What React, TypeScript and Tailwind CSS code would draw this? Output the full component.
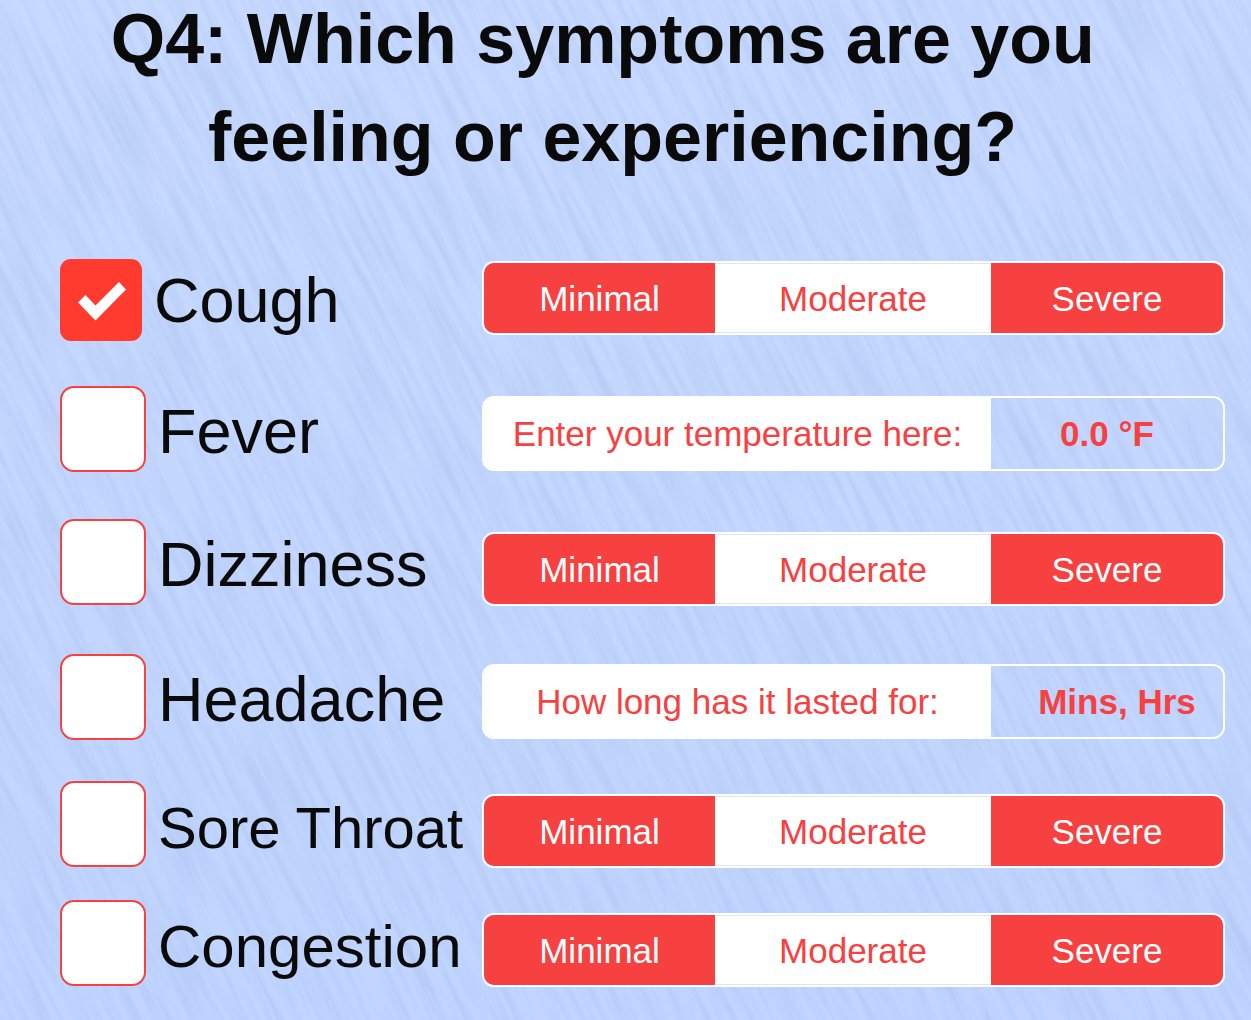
import { useState } from "react";

type Control =
  | { kind: "severity" }
  | { kind: "entry"; prompt: string; value: string; inputClass: string };

type Symptom = {
  id: string;
  label: string;
  rowClass: string;
  labelClass: string;
  control: Control;
};

const severity: Control = { kind: "severity" };

const symptoms: Symptom[] = [
  { id: "cough", label: "Cough", rowClass: "", labelClass: "text-[63px]", control: severity },
  {
    id: "fever",
    label: "Fever",
    rowClass: "mt-[45px]",
    labelClass: "pt-1 text-[63px]",
    control: { kind: "entry", prompt: "Enter your temperature here:", value: "0.0 °F", inputClass: "" },
  },
  { id: "dizziness", label: "Dizziness", rowClass: "mt-[47px]", labelClass: "pt-1 text-[63px]", control: severity },
  {
    id: "headache",
    label: "Headache",
    rowClass: "mt-12",
    labelClass: "pt-1 text-[63px]",
    control: { kind: "entry", prompt: "How long has it lasted for:", value: "Mins, Hrs", inputClass: "pl-5" },
  },
  { id: "sore-throat", label: "Sore Throat", rowClass: "mt-[41px]", labelClass: "pt-2 text-[58px]", control: severity },
  { id: "congestion", label: "Congestion", rowClass: "mt-8", labelClass: "pt-2 text-[60px]", control: severity },
];

function Texture() {
  return (
    <svg className="absolute inset-0 -z-10 h-full w-full" aria-hidden="true">
      <defs>
        <filter id="streaks" x="0" y="0" width="100%" height="100%" colorInterpolationFilters="sRGB">
          <feTurbulence type="fractalNoise" baseFrequency="0.009 0.13" numOctaves="3" seed="8" />
          <feColorMatrix values="0 0 0 0 0.6  0 0 0 0 0.69  0 0 0 0 0.87  1.1 0 0 0 -0.4" />
        </filter>
        <linearGradient id="sky" x1="0" y1="0" x2="0" y2="1">
          <stop offset="0" stopColor="#c7d9ff" />
          <stop offset="1" stopColor="#c0d5ff" />
        </linearGradient>
      </defs>
      <rect width="100%" height="100%" fill="url(#sky)" />
      <g transform="rotate(64)" opacity="0.5">
        <rect x="-200" y="-1300" width="2500" height="2300" filter="url(#streaks)" />
      </g>
    </svg>
  );
}

function SeverityPicker({ name }: { name: string }) {
  return (
    <div
      role="group"
      aria-label={`${name} severity`}
      className="grid h-[74px] grid-cols-[231fr_276fr_232fr] overflow-hidden rounded-xl border-2 border-white text-[35px] leading-none"
    >
      <button type="button" className="bg-[#f74141] text-white">Minimal</button>
      <button type="button" className="border-y border-[#dbe6fd] bg-white text-[#f74141]">Moderate</button>
      <button type="button" className="bg-[#f74141] text-white">Severe</button>
    </div>
  );
}

function EntryField({ id, prompt, value, inputClass }: { id: string; prompt: string; value: string; inputClass: string }) {
  return (
    <div className="grid h-[75px] grid-cols-[507fr_232fr] overflow-hidden rounded-xl border-2 border-white text-[35px] leading-none text-[#f74141]">
      <label htmlFor={id} className="flex items-center justify-center bg-white whitespace-nowrap">
        {prompt}
      </label>
      <input
        id={id}
        type="text"
        defaultValue={value}
        className={`w-full min-w-0 bg-transparent text-center font-bold outline-none ${inputClass}`}
      />
    </div>
  );
}

function SymptomRow({ symptom }: { symptom: Symptom }) {
  const [checked, setChecked] = useState(symptom.id === "cough");
  const { id, label, control, rowClass, labelClass } = symptom;
  const controlPadding = checked ? "pt-0.5" : control.kind === "entry" ? "pt-2.5" : "pt-[13px]";
  return (
    <li className={`grid grid-cols-[422fr_743fr] items-start ${rowClass}`}>
      <div className="flex items-center gap-3">
        <span className="relative shrink-0">
          <input
            id={id}
            type="checkbox"
            checked={checked}
            onChange={(e) => setChecked(e.target.checked)}
            className="block size-[86px] appearance-none rounded-[14px] border-2 border-[#f74141] bg-white checked:size-[82px] checked:rounded-[11px] checked:border-0 checked:bg-[#ff3b30]"
          />
          {checked && (
            <svg viewBox="0 0 82 82" className="pointer-events-none absolute inset-0 size-full" aria-hidden="true">
              <path d="M18 43.5 25.5 36 35.5 46.5 59 23 66 30.5 35.5 61.5Z" fill="#fff" />
            </svg>
          )}
        </span>
        <label htmlFor={id} className={`leading-none whitespace-nowrap ${labelClass}`}>
          {label}
        </label>
      </div>
      <div className={controlPadding}>
        {control.kind === "severity" ? (
          <SeverityPicker name={label} />
        ) : (
          <EntryField
            id={`${id}-entry`}
            prompt={control.prompt}
            value={control.value}
            inputClass={control.inputClass}
          />
        )}
      </div>
    </li>
  );
}

export default function App() {
  return (
    <main className="relative isolate min-h-screen overflow-hidden font-['Liberation_Sans',Arial,sans-serif] text-[#0a0a0a]">
      <Texture />
      <h1 className="-mt-2.5 pr-[26px] text-center text-[70px] leading-[98px] font-bold whitespace-pre">
        {"Q4: Which symptoms are you \nfeeling or experiencing?"}
      </h1>
      <ul className="mt-[73px] pr-[26px] pl-[60px]">
        {symptoms.map((s) => (
          <SymptomRow key={s.id} symptom={s} />
        ))}
      </ul>
    </main>
  );
}
